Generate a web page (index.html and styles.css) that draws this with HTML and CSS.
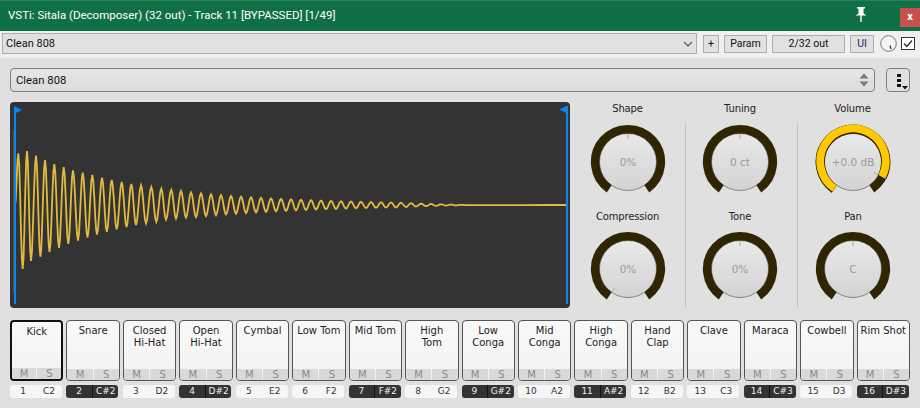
FILE: index.html
```html
<!DOCTYPE html>
<html lang="en">
<head>
    <meta charset="UTF-8">
    <title>VSTi: Sitala (Decomposer) (32 out) - Track 11 [BYPASSED] [1/49]</title>
    <link rel="stylesheet" href="styles.css">
</head>
<body>

    <svg class="svg-defs">
        <defs>
            <linearGradient id="knob-fill" x1="0" y1="0" x2="0" y2="1">
                <stop offset="0" stop-color="#e9e9e9"/>
                <stop offset="1" stop-color="#d3d3d3"/>
            </linearGradient>
            <g id="knob-base">
                <circle r="28.5" fill="url(#knob-fill)" stroke="#858585"/>
                <path d="M-18.81 26.87A32.8 32.8 0 1 1 18.81 26.87" fill="none" stroke="#2f2500" stroke-width="8.6"/>
            </g>
        </defs>
    </svg>

    <div class="titlebar">
        <span class="title-text">VSTi: Sitala (Decomposer) (32 out) - Track 11 [BYPASSED] [1/49]</span>
        <svg class="pin" width="14" height="16" viewBox="0 0 14 16">
            <path d="M3 0h8v1.5H9.5V6.5L12.5 8.5H1.5L4.5 6.5V1.5H3z" fill="#fff"/>
            <rect x="6.3" y="8" width="1.4" height="7" fill="#fff"/>
        </svg>
        <div class="close-btn">x</div>
    </div>

    <div class="toolbar">
        <div class="combo">
            <span>Clean 808</span>
            <svg width="10" height="6" viewBox="0 0 10 6"><path d="M1 1l4 4 4-4" fill="none" stroke="#555" stroke-width="1.1"/></svg>
        </div>
        <div class="tool-btn tool-plus">+</div>
        <div class="tool-btn tool-param">Param</div>
        <div class="tool-btn tool-out">2/32 out</div>
        <div class="tool-btn tool-ui">UI</div>
        <svg class="wet-knob" width="17" height="17" viewBox="0 0 17 17">
            <circle cx="8.5" cy="8.5" r="7.8" fill="#f4f4f4" stroke="#777"/>
            <path d="M10 10.5l1 3.5" stroke="#333" stroke-width="1.2"/>
        </svg>
        <svg class="bypass" width="14" height="13" viewBox="0 0 14 13">
            <rect x="0.5" y="0.5" width="13" height="12" fill="#fff" stroke="#333"/>
            <path d="M3 6.5l2.8 3L11 3.5" fill="none" stroke="#222" stroke-width="1.2"/>
        </svg>
    </div>

    <div class="plugin">
        <div class="kit-row">
            <div class="kit-select">
                <span>Clean 808</span>
                <svg width="10" height="14" viewBox="0 0 10 14">
                    <path d="M5 0.5L9.5 5.5H0.5z" fill="#777"/>
                    <path d="M5 13.5L9.5 8.5H0.5z" fill="#777"/>
                </svg>
            </div>
            <div class="kit-menu">
                <svg width="22" height="20" viewBox="0 0 22 20">
                    <rect x="10" y="4" width="4" height="3" fill="#111"/>
                    <rect x="10" y="9" width="4" height="3" fill="#111"/>
                    <rect x="10" y="14" width="4" height="3" fill="#111"/>
                    <path d="M15 16h6l-3 3.5z" fill="#111"/>
                </svg>
            </div>
        </div>

        <div class="middle-row">
            <div class="wave-panel">
                <svg id="wave" width="560" height="206" viewBox="10 102 560 206">
                    <path d="M14.5 130V293" stroke="#7d7448" stroke-width="2"/>
                    <polyline id="wave-line" fill="none" stroke="#e2bb3c" stroke-width="1.8"/>
                    <path d="M14 106L22 110 16 113V304H14z" fill="#0a84f2"/>
                    <path d="M568 106V304H566V113L559.5 109.5 566 106z" fill="#0a84f2"/>
                </svg>
            </div>

            <div class="knobs">
                <div class="knob-col">
                    <div class="knob-label knob-label-top">Shape</div>
                    <div class="knob-col-body">
                        <svg class="knob" viewBox="-38 -38 76 76">
                            <use href="#knob-base"/>
                            <path class="knob-tick" d="M0-28V-23"/>
                            <text class="knob-value" y="4">0%</text>
                        </svg>
                        <div class="knob-label">Compression</div>
                        <svg class="knob" viewBox="-38 -38 76 76">
                            <use href="#knob-base"/>
                            <path class="knob-tick" d="M-16.1 22.9L-13.2 18.8"/>
                            <text class="knob-value" y="4">0%</text>
                        </svg>
                    </div>
                </div>
                <div class="knob-col">
                    <div class="knob-label knob-label-top">Tuning</div>
                    <div class="knob-col-body">
                        <svg class="knob" viewBox="-38 -38 76 76">
                            <use href="#knob-base"/>
                            <path class="knob-tick" d="M0-28V-23"/>
                            <text class="knob-value" y="4">0 ct</text>
                        </svg>
                        <div class="knob-label">Tone</div>
                        <svg class="knob" viewBox="-38 -38 76 76">
                            <use href="#knob-base"/>
                            <path class="knob-tick" d="M0-28V-23"/>
                            <text class="knob-value" y="4">0%</text>
                        </svg>
                    </div>
                </div>
                <div class="knob-col">
                    <div class="knob-label knob-label-top">Volume</div>
                    <div class="knob-col-body">
                        <svg class="knob" viewBox="-38 -38 76 76">
                            <use href="#knob-base"/>
                            <path d="M-18.81 26.87A32.8 32.8 0 1 1 29.2 14.9" fill="none" stroke="#2f2500" stroke-width="9.2"/>
                            <path d="M-18.5 26.4A32.8 32.8 0 1 1 28.9 14.8" fill="none" stroke="#ffc800" stroke-width="7.8"/>
                            <path class="knob-tick" d="M24.9 12.7L20.5 10.4"/>
                            <text class="knob-value" y="4">+0.0 dB</text>
                        </svg>
                        <div class="knob-label">Pan</div>
                        <svg class="knob" viewBox="-38 -38 76 76">
                            <use href="#knob-base"/>
                            <path class="knob-tick" d="M0-28V-23"/>
                            <text class="knob-value" y="4">C</text>
                        </svg>
                    </div>
                </div>
            </div>
        </div>

        <div class="pads">
            <div class="pad-col">
                <div class="pad pad-selected"><div class="pad-name">Kick</div><div class="pad-ms"><span>M</span><span>S</span></div></div>
                <div class="key"><span>1</span><span>C2</span></div>
            </div>
            <div class="pad-col">
                <div class="pad"><div class="pad-name">Snare</div><div class="pad-ms"><span>M</span><span>S</span></div></div>
                <div class="key key-black"><span>2</span><span>C#2</span></div>
            </div>
            <div class="pad-col">
                <div class="pad"><div class="pad-name">Closed<br>Hi-Hat</div><div class="pad-ms"><span>M</span><span>S</span></div></div>
                <div class="key"><span>3</span><span>D2</span></div>
            </div>
            <div class="pad-col">
                <div class="pad"><div class="pad-name">Open<br>Hi-Hat</div><div class="pad-ms"><span>M</span><span>S</span></div></div>
                <div class="key key-black"><span>4</span><span>D#2</span></div>
            </div>
            <div class="pad-col">
                <div class="pad"><div class="pad-name">Cymbal</div><div class="pad-ms"><span>M</span><span>S</span></div></div>
                <div class="key"><span>5</span><span>E2</span></div>
            </div>
            <div class="pad-col">
                <div class="pad"><div class="pad-name">Low Tom</div><div class="pad-ms"><span>M</span><span>S</span></div></div>
                <div class="key"><span>6</span><span>F2</span></div>
            </div>
            <div class="pad-col">
                <div class="pad"><div class="pad-name">Mid Tom</div><div class="pad-ms"><span>M</span><span>S</span></div></div>
                <div class="key key-black"><span>7</span><span>F#2</span></div>
            </div>
            <div class="pad-col">
                <div class="pad"><div class="pad-name">High<br>Tom</div><div class="pad-ms"><span>M</span><span>S</span></div></div>
                <div class="key"><span>8</span><span>G2</span></div>
            </div>
            <div class="pad-col">
                <div class="pad"><div class="pad-name">Low<br>Conga</div><div class="pad-ms"><span>M</span><span>S</span></div></div>
                <div class="key key-black"><span>9</span><span>G#2</span></div>
            </div>
            <div class="pad-col">
                <div class="pad"><div class="pad-name">Mid<br>Conga</div><div class="pad-ms"><span>M</span><span>S</span></div></div>
                <div class="key"><span>10</span><span>A2</span></div>
            </div>
            <div class="pad-col">
                <div class="pad"><div class="pad-name">High<br>Conga</div><div class="pad-ms"><span>M</span><span>S</span></div></div>
                <div class="key key-black"><span>11</span><span>A#2</span></div>
            </div>
            <div class="pad-col">
                <div class="pad"><div class="pad-name">Hand<br>Clap</div><div class="pad-ms"><span>M</span><span>S</span></div></div>
                <div class="key"><span>12</span><span>B2</span></div>
            </div>
            <div class="pad-col">
                <div class="pad"><div class="pad-name">Clave</div><div class="pad-ms"><span>M</span><span>S</span></div></div>
                <div class="key"><span>13</span><span>C3</span></div>
            </div>
            <div class="pad-col">
                <div class="pad"><div class="pad-name">Maraca</div><div class="pad-ms"><span>M</span><span>S</span></div></div>
                <div class="key key-black"><span>14</span><span>C#3</span></div>
            </div>
            <div class="pad-col">
                <div class="pad"><div class="pad-name">Cowbell</div><div class="pad-ms"><span>M</span><span>S</span></div></div>
                <div class="key"><span>15</span><span>D3</span></div>
            </div>
            <div class="pad-col">
                <div class="pad"><div class="pad-name">Rim Shot</div><div class="pad-ms"><span>M</span><span>S</span></div></div>
                <div class="key key-black"><span>16</span><span>D#3</span></div>
            </div>
        </div>
    </div>

    <script src="waveform.js"></script>
</body>

</html>
```

FILE: styles.css
```css
body {
    margin: 0;
    width: 920px;
    height: 408px;
    overflow: hidden;
    background-color: #e0e0e0;
    font-family: 'Roboto', sans-serif;
    font-size: 11px;
    color: #111;
}

.svg-defs {
    position: absolute;
    width: 0;
    height: 0;
}

/* window chrome */
.titlebar {
    height: 31px;
    box-sizing: border-box;
    display: flex;
    align-items: flex-start;
    background-color: #0f7045;
    border-top: 1px solid #2a7d58;
    color: #fff;
}

.title-text {
    flex: 1;
    padding: 6px 0 0 8px;
    font-size: 11.5px;
    line-height: 17px;
}

.pin {
    margin: 6px 32px 0 0;
}

.close-btn {
    width: 20px;
    height: 19px;
    margin-top: 7px;
    background-color: #c75050;
    font-weight: bold;
    font-size: 11px;
    line-height: 17px;
    text-align: center;
}

.toolbar {
    height: 27px;
    box-sizing: border-box;
    display: flex;
    align-items: center;
    gap: 5px;
    padding: 0 5px 2px 2px;
    background-color: #f0f0f0;
}

.combo {
    flex: 1;
    height: 21px;
    box-sizing: border-box;
    display: flex;
    align-items: center;
    justify-content: space-between;
    margin-right: 1px;
    padding: 0 3px;
    background-color: #e1e1e1;
    border: 1px solid #adadad;
}

.tool-btn {
    height: 18px;
    box-sizing: border-box;
    background-color: #e1e1e1;
    border: 1px solid #adadad;
    font-size: 10.5px;
    line-height: 15px;
    text-align: center;
}

.tool-plus { width: 16px; }
.tool-param { width: 43px; }
.tool-out { width: 73px; }
.tool-ui { width: 24px; color: #2b1a70; }

.wet-knob { margin-left: 1px; }
.bypass { margin-left: -1px; }

/* plugin body */
.plugin {
    padding: 10px 10px 0;
}

.kit-row {
    display: flex;
    gap: 11px;
}

.kit-select {
    flex: 1;
    height: 24px;
    box-sizing: border-box;
    display: flex;
    align-items: center;
    justify-content: space-between;
    padding: 0 5px;
    background: linear-gradient(#e6e6e6, #dcdcdc);
    border: 1px solid #808080;
    border-radius: 4px;
    font-size: 11.3px;
}

.kit-menu {
    width: 24px;
    height: 24px;
    box-sizing: border-box;
    display: flex;
    align-items: center;
    justify-content: center;
    border: 1px solid #808080;
    border-radius: 4px;
}

.middle-row {
    display: flex;
    margin-top: 10px;
}

.wave-panel {
    width: 560px;
    height: 206px;
    background-color: #333;
    border-radius: 4px;
}

#wave {
    display: block;
}

.knobs {
    display: grid;
    grid-template-columns: 115px 112px 113px;
}

.knob-col {
    display: flex;
    flex-direction: column;
}

.knob-col-body {
    flex: 1;
    display: flex;
    flex-direction: column;
    align-items: center;
}

.knob-col:nth-child(2) .knob-col-body {
    border-left: 1px solid #c4c4c4;
    padding-right: 3px;
}

.knob-col:nth-child(3) .knob-col-body {
    border-left: 1px solid #c4c4c4;
    padding-right: 2px;
}

.knob-col:nth-child(2) .knob-label-top { padding-right: 2px; }
.knob-col:nth-child(3) .knob-label-top { padding-right: 2px; }

.knob-label {
    height: 31px;
    line-height: 33px;
    font-family: 'DejaVu Sans', sans-serif;
    font-size: 10px;
    letter-spacing: -0.15px;
    text-align: center;
    color: #222;
}

.knob-label-top {
    height: 21px;
    line-height: 14px;
}

.knob {
    display: block;
    width: 76px;
    height: 76px;
    margin-top: 1px;
    flex: none;
}

.knob-label + .knob {
    margin-top: 0;
}

.knob-tick {
    stroke: #bcbcbc;
    stroke-width: 1.5;
    fill: none;
}

.knob-value {
    font-family: 'DejaVu Sans', sans-serif;
    font-size: 10.5px;
    fill: #9a9a9a;
    text-anchor: middle;
}

/* drum pads */
.pads {
    display: grid;
    grid-template-columns: repeat(16, 1fr);
    gap: 3px;
    margin-top: 12px;
    font-family: 'DejaVu Sans', sans-serif;
    font-size: 10px;
}

.pad-col {
    display: flex;
    flex-direction: column;
    gap: 4px;
}

.pad {
    height: 61px;
    box-sizing: border-box;
    display: flex;
    flex-direction: column;
    background: linear-gradient(#f9f9f9, #f2f2f2);
    border: 1px solid #555;
    border-radius: 4px;
    overflow: hidden;
}

.pad-selected {
    border: 2px solid #111;
}

.pad-name {
    flex: 1;
    padding-top: 4px;
    line-height: 12px;
    text-align: center;
    color: #222;
}

.pad-ms {
    display: flex;
    gap: 1px;
    height: 11px;
}

.pad-ms span {
    flex: 1;
    background-color: #d9d9d9;
    color: #8a8a8a;
    line-height: 11px;
    text-align: center;
}

.key {
    width: 52px;
    height: 13px;
    display: flex;
    background-color: #f6f6f6;
    border-radius: 3px;
    line-height: 13px;
    font-size: 9px;
    color: #333;
}

.key span {
    flex: 1;
    text-align: center;
}

.key-black {
    background-color: #333;
    color: #f0f0f0;
}

.key-black span + span {
    border-left: 1px solid #111;
}
```

FILE: waveform.js
```js
// extremes of the sample as [x, distance from the centre line], alternating up and down
const centre = 205;
const start = [
    [18.3, 51.7], [22.7, 64], [27, 54], [31, 56], [36, 49.3], [40.4, 51.7], [45, 45], [49.5, 47],
    [54.3, 41], [59, 43], [63.7, 38], [68.3, 39], [73, 34.7], [78, 35.7], [82.7, 32.3], [87.5, 32.7],
    [92.3, 30], [97, 29.7], [102, 27.3], [106.8, 26.7], [111.7, 25], [116.7, 24.3], [121.7, 23], [126.5, 22],
    [131.3, 21], [136, 20], [141, 19.7], [146, 18.3], [151.3, 18], [156.3, 16.7], [161.3, 16.3], [166, 14.6],
    [171.3, 15], [176, 13.5], [181, 14], [186, 12.5]
];

const extremes = [[15, centre]];
start.forEach(function(p, i) {
    extremes.push([p[0], centre + (i % 2 ? p[1] : -p[1])]);
});

// the tail is regular enough to just decay it
for (let x = 191, up = true; x < 470; x += 5, up = !up) {
    const amp = 12.5 * Math.exp(-(x - 191) / 124) * Math.min(1, (470 - x) / 70);
    extremes.push([x, centre + (up ? -amp : amp)]);
}
extremes.push([566, centre]);

const points = [];
for (let i = 0; i < extremes.length - 1; i++) {
    const a = extremes[i];
    const b = extremes[i + 1];
    const steps = 5;
    for (let s = 0; s < steps; s++) {
        const t = s / steps;
        const y = a[1] + (b[1] - a[1]) * (1 - Math.cos(Math.PI * t)) / 2;
        points.push((a[0] + (b[0] - a[0]) * t).toFixed(2) + ',' + y.toFixed(2));
    }
}
points.push('566,' + centre);

document.getElementById('wave-line').setAttribute('points', points.join(' '));
```
